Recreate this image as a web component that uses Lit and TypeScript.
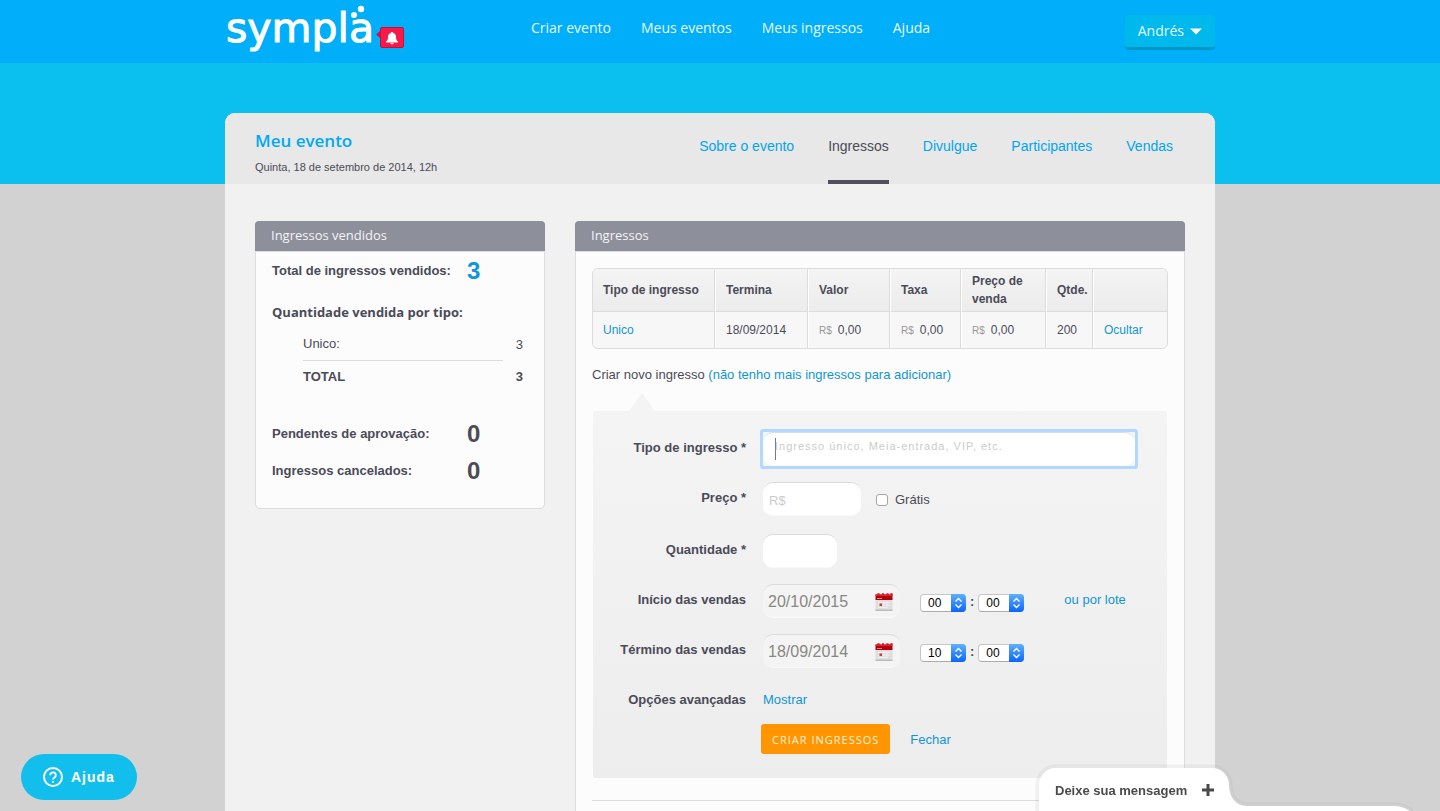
import { LitElement, html, css, svg } from "lit";
import { customElement, property } from "lit/decorators.js";
import { classMap } from "lit/directives/class-map.js";

const SANS = css`"Liberation Sans", Arial, Helvetica, sans-serif`;
const OPEN = css`"Open Sans", "Noto Sans", sans-serif`;

const base = css`
  *,
  *::before,
  *::after {
    box-sizing: border-box;
  }
  a {
    color: #1096d4;
    text-decoration: none;
  }
  h1,
  h2,
  h3,
  p {
    margin: 0;
  }
`;

@customElement("site-header")
export class SiteHeader extends LitElement {
  static styles = [
    base,
    css`
      :host {
        display: block;
        background: #00aef9;
        font-family: ${OPEN};
      }
      .inner {
        display: grid;
        grid-template-columns: 306px 1fr auto;
        align-items: start;
        max-width: 990px;
        height: 63px;
        margin: 0 auto;
      }
      .brand {
        display: flex;
      }
      .word {
        font: 400 41px "DejaVu Sans", sans-serif;
      }
      nav {
        display: flex;
        gap: 30px;
        padding-top: 18px;
        font-size: 14px;
        line-height: 20px;
      }
      nav a {
        color: #e6f7ff;
      }
      .user {
        display: flex;
        align-items: center;
        gap: 6px;
        height: 35px;
        margin-top: 15px;
        padding: 0 13px;
        border: 0;
        border-bottom: 3px solid #0097c6;
        border-radius: 4px;
        background: #00b9ec;
        color: #e6f7ff;
        font: 14px/20px ${OPEN};
      }
    `,
  ];

  render() {
    return html`
      <header class="inner">
        <a class="brand" href="#" aria-label="sympla">
          <svg width="182" height="60" viewBox="0 0 182 60">
            <text class="word" x="1" y="42" fill="#fff" stroke="#fff" stroke-width="1">sympla</text>
            <circle cx="129" cy="15" r="3" fill="#fff" />
            <circle cx="136" cy="9" r="3.200" fill="#fff" />
            <path d="M151 34.500l4-3.500v7z" fill="#d5123f" />
            <rect x="155.500" y="27.500" width="23" height="20" rx="1.500" fill="#f6194a" stroke="#c2123b" />
            <path
              d="M167 32c.8 0 1.200.5 1.200 1.100 1.900.6 2.800 2 2.800 3.900 0 2.600.6 3.600 2 4.600v.9h-12v-.9c1.400-1 2-2 2-4.600 0-1.900.9-3.300 2.800-3.900 0-.6.4-1.100 1.200-1.100zM165.500 43h3a1.500 1.200 0 0 1-3 0z"
              fill="#fff"
            />
          </svg>
        </a>
        <nav>
          <a href="#">Criar evento</a>
          <a href="#">Meus eventos</a>
          <a href="#">Meus ingressos</a>
          <a href="#">Ajuda</a>
        </nav>
        <button class="user" type="button">
          Andrés
          <svg width="12" height="7" viewBox="0 0 12 7"><path d="M0 .5h12l-6 6z" fill="#fff" /></svg>
        </button>
      </header>
    `;
  }
}

@customElement("event-heading")
export class EventHeading extends LitElement {
  static styles = [
    base,
    css`
      :host {
        display: flex;
        justify-content: space-between;
        height: 71px;
        padding: 0 42px 0 30px;
        border-radius: 10px 10px 0 0;
        background: #e8e8e8;
      }
      .title {
        padding-top: 16px;
      }
      h1 {
        color: #00aaf2;
        font: 600 17px/24px ${OPEN};
      }
      p {
        font-size: 11px;
        line-height: 28px;
      }
      .tabs {
        display: flex;
        gap: 34px;
        font-size: 14px;
        line-height: 67px;
      }
      .tab {
        color: #00a5ee;
      }
      .active {
        border-bottom: 4px solid #505060;
        color: #4b4b58;
      }
    `,
  ];

  private tabs = ["Sobre o evento", "Ingressos", "Divulgue", "Participantes", "Vendas"];

  render() {
    return html`
      <div class="title">
        <h1>Meu evento</h1>
        <p>Quinta, 18 de setembro de 2014, 12h</p>
      </div>
      <nav class="tabs">
        ${this.tabs.map(
          (t) => html`<a href="#" class=${classMap({ tab: true, active: t === "Ingressos" })}>${t}</a>`
        )}
      </nav>
    `;
  }
}

@customElement("content-panel")
export class ContentPanel extends LitElement {
  static styles = [
    base,
    css`
      :host {
        display: flex;
        flex-direction: column;
      }
      h2 {
        padding: 0 16px 2px;
        border-radius: 4px 4px 0 0;
        background: #8d8f9b;
        color: #f4f4f6;
        font: 400 13px/28px ${OPEN};
      }
      .body {
        flex: 1;
        padding: 0 16px;
        border: 1px solid #dcdcdc;
        border-radius: 0 0 5px 5px;
        background: #fcfcfc;
      }
      .flush {
        border-bottom: 0;
        border-radius: 0;
      }
    `,
  ];

  @property() heading = "";
  @property({ type: Boolean }) flush = false;

  render() {
    return html`<h2>${this.heading}</h2>
      <div class=${classMap({ body: true, flush: this.flush })}><slot></slot></div>`;
  }
}

@customElement("sales-summary")
export class SalesSummary extends LitElement {
  static styles = [
    base,
    css`
      :host {
        display: block;
        padding-bottom: 19px;
        font-size: 13px;
      }
      .stat {
        display: grid;
        grid-template-columns: 195px 1fr;
        font-weight: 700;
        line-height: 37px;
      }
      .figure {
        font-size: 24px;
      }
      .sold {
        color: #1096d4;
      }
      h3 {
        margin-top: 13px;
        font: 700 13px/20px ${OPEN};
      }
      table {
        margin: 5px 0 24px 31px;
        border-spacing: 0;
      }
      th,
      td {
        height: 30px;
        padding: 0;
      }
      th {
        width: 200px;
        font-weight: 400;
        text-align: left;
      }
      td {
        width: 20px;
        text-align: right;
      }
      .first th {
        height: 34px;
        border-bottom: 1px solid #dcdcdc;
      }
      .total th,
      .total td {
        font-weight: 700;
      }
    `,
  ];

  render() {
    return html`
      <div class="stat"><span>Total de ingressos vendidos:</span><span class="figure sold">3</span></div>
      <h3>Quantidade vendida por tipo:</h3>
      <table>
        <tr class="first">
          <th scope="row">Unico:</th>
          <td>3</td>
        </tr>
        <tr class="total">
          <th scope="row">TOTAL</th>
          <td>3</td>
        </tr>
      </table>
      <div class="stat"><span>Pendentes de aprovação:</span><span class="figure">0</span></div>
      <div class="stat"><span>Ingressos cancelados:</span><span class="figure">0</span></div>
    `;
  }
}

@customElement("ticket-table")
export class TicketTable extends LitElement {
  static styles = [
    base,
    css`
      :host {
        display: block;
        font-size: 12px;
        line-height: 18px;
      }
      table {
        width: 100%;
        overflow: hidden;
        border: 1px solid #dcdcdc;
        border-radius: 6px;
        border-spacing: 0;
        table-layout: fixed;
        background: #f7f7f7;
      }
      th,
      td {
        padding: 0 0 0 10px;
        border-right: 1px solid #dcdcdc;
        border-left: 1px solid #fff;
        text-align: left;
      }
      th {
        height: 43px;
        border-bottom: 1px solid #dcdcdc;
        background: linear-gradient(#f4f4f4, #ececec);
      }
      td {
        height: 36px;
      }
      th:first-child,
      td:first-child {
        border-left: 0;
      }
      th:last-child,
      td:last-child {
        border-right: 0;
      }
      .type {
        width: 122px;
      }
      .ends {
        width: 93px;
      }
      .value {
        width: 82px;
      }
      .fee {
        width: 71px;
      }
      .price {
        width: 85px;
      }
      .qty {
        width: 47px;
      }
      .currency {
        margin-right: 6px;
        color: #999;
        font-size: 10px;
      }
    `,
  ];

  private money = (v: string) => html`<span class="currency">R$</span>${v}`;

  render() {
    return html`
      <table>
        <thead>
          <tr>
            <th class="type">Tipo de ingresso</th>
            <th class="ends">Termina</th>
            <th class="value">Valor</th>
            <th class="fee">Taxa</th>
            <th class="price">Preço de<br />venda</th>
            <th class="qty">Qtde.</th>
            <th></th>
          </tr>
        </thead>
        <tbody>
          <tr>
            <td><a href="#">Unico</a></td>
            <td>18/09/2014</td>
            <td>${this.money("0,00")}</td>
            <td>${this.money("0,00")}</td>
            <td>${this.money("0,00")}</td>
            <td>200</td>
            <td><a href="#">Ocultar</a></td>
          </tr>
        </tbody>
      </table>
    `;
  }
}

const calendarIcon = svg`
  <rect x="0.500" y="7" width="17" height="11" fill="#dedede"/>
  <rect x="0.500" y="16.500" width="17" height="1.500" fill="#bcbcbc"/>
  <path d="M.5 7V1.500h2V.5h2v1h2.500V.5h2v1h2.500V.5h2v1h2V.5h2V7z" fill="#b5000c"/>
  <path d="M.5 1.500h2V.5h2v1h2.500V.5h2v1h2.500V.5h2v1h2V.5h2v2.500H.5z" fill="#d9222b"/>
  <path d="M2 5.500h5" stroke="#d98488"/>
  <path d="M3 9.500h12M3 12h12M3 14.500h9M9 8.500v7M12 8.500v7" stroke="#efefef"/>
  <rect x="4.500" y="10.500" width="2.500" height="2.500" fill="#c33c41"/>
`;

@customElement("ticket-form")
export class TicketForm extends LitElement {
  static styles = [
    base,
    css`
      :host {
        display: block;
        margin: 0 1px;
        font-size: 13px;
      }
      .pointer {
        display: block;
        margin-left: 36px;
      }
      form {
        padding: 21px 0 24px;
        border-radius: 3px;
        background: linear-gradient(#f4f4f4, #ededed);
      }
      .row {
        display: grid;
        grid-template-columns: 153px 1fr;
        column-gap: 17px;
        margin-bottom: 16px;
        line-height: 32px;
      }
      .price-row {
        margin-bottom: 18px;
      }
      .options-row {
        margin-bottom: 8px;
      }
      .name {
        font-weight: 700;
        text-align: right;
      }
      .fields {
        display: flex;
        align-items: flex-start;
        padding-right: 32px;
      }
      .text {
        height: 34px;
        padding: 0 6px;
        border: 0;
        border-top: 1px solid #dcdcdc;
        border-bottom: 1px solid #fafafa;
        border-radius: 10px;
        outline: 0;
        background: #fff;
        color: #888;
        font: 13px ${SANS};
      }
      .text::placeholder {
        color: #ccc;
        opacity: 1;
      }
      .focus {
        display: flex;
        flex: 1;
        border-radius: 1px;
        background: #f5f5f5;
        box-shadow: 0 0 0 3px #b2d8fd;
      }
      .wide {
        flex: 1;
        min-width: 0;
        padding: 0 12px 6px;
        /* insertion bar of the focused field */
        background: linear-gradient(#777, #777) no-repeat 12px 5px / 1px 22px #fff;
        font-size: 11px;
        letter-spacing: 1px;
      }
      .price {
        width: 98px;
        padding-top: 2px;
      }
      .amount {
        width: 74px;
      }
      .free {
        display: flex;
        align-items: center;
        gap: 7px;
        margin: 2px 0 0 15px;
      }
      .check {
        width: 12px;
        height: 12px;
        margin: 0;
        border: 1px solid #a5a5a5;
        border-radius: 3px;
        appearance: none;
        background: #fff;
      }
      .date {
        display: flex;
        align-items: center;
        width: 137px;
        height: 34px;
        padding: 2px 7px 0 0;
        border-top: 1px solid #dcdcdc;
        border-bottom: 1px solid #fafafa;
        border-radius: 10px;
        background: #f4f4f4;
      }
      .day {
        flex: 1;
        min-width: 0;
        padding: 0 0 0 5px;
        border: 0;
        background: none;
        color: #888880;
        font: 16px ${SANS};
      }
      .pick {
        display: flex;
        padding: 0;
        border: 0;
        background: none;
      }
      .time {
        display: flex;
        gap: 4px;
        margin: 10px 0 0 20px;
        font-weight: 700;
        line-height: 16px;
      }
      .select {
        display: grid;
        grid-template-columns: 30px 16px;
      }
      .select select {
        grid-area: 1 / 1 / 2 / 3;
        height: 18px;
        padding: 0 0 0 7px;
        border: 1px solid #c6c6c6;
        border-bottom-color: #aaa;
        border-radius: 4px;
        appearance: none;
        background: #fff;
        color: #000;
        font: 12px ${SANS};
      }
      .select svg {
        grid-area: 1 / 2;
        z-index: 1;
        pointer-events: none;
      }
      .batch {
        margin-left: 40px;
      }
      .actions {
        display: flex;
        align-items: center;
        gap: 20px;
        padding-left: 168px;
      }
      .submit {
        height: 30px;
        padding: 0 11px;
        border: 0;
        border-radius: 3px;
        background: #ff9500;
        color: #fff2de;
        font: 11px ${OPEN};
        letter-spacing: 1px;
        text-transform: uppercase;
      }
    `,
  ];

  private picker(label: string, value: string) {
    return html`
      <span class="select">
        <select aria-label=${label}>
          <option>${value}</option>
        </select>
        <svg width="16" height="18" viewBox="0 0 16 18">
          <defs>
            <linearGradient id="blue" x1="0" y1="0" x2="0" y2="1">
              <stop offset="0" stop-color="#5fb0fb" />
              <stop offset="1" stop-color="#0a66fb" />
            </linearGradient>
          </defs>
          <path d="M1 0h11a4 4 0 0 1 4 4v10a4 4 0 0 1-4 4H1z" fill="url(#blue)" />
          <path d="M5.500 7.500l3-3 3 3M5.500 10.500l3 3 3-3" fill="none" stroke="#fff" stroke-width="1.400" />
        </svg>
      </span>
    `;
  }

  private period(id: string, label: string, date: string, hour: string, minute: string, extra: unknown = "") {
    return html`
      <div class="row">
        <label class="name" for=${id}>${label}</label>
        <div class="fields">
          <span class="date">
            <input class="day" id=${id} type="text" .value=${date} />
            <button class="pick" type="button" aria-label="Calendário">
              <svg width="18" height="18" viewBox="0 0 18 18">${calendarIcon}</svg>
            </button>
          </span>
          <span class="time">${this.picker("Hora", hour)}<span>:</span>${this.picker("Minuto", minute)}</span>
          ${extra}
        </div>
      </div>
    `;
  }

  render() {
    return html`
      <svg class="pointer" width="26" height="18" viewBox="0 0 26 18">
        <path d="M13 0l13 18H0z" fill="#f4f4f4" />
      </svg>
      <form>
        <div class="row">
          <label class="name" for="type">Tipo de ingresso *</label>
          <div class="fields">
            <span class="focus">
              <input
                class="text wide"
                id="type"
                type="text"
                placeholder="Ingresso único, Meia-entrada, VIP, etc."
              />
            </span>
          </div>
        </div>
        <div class="row price-row">
          <label class="name" for="price">Preço *</label>
          <div class="fields">
            <input class="text price" id="price" type="text" placeholder="R$" />
            <label class="free"><input class="check" type="checkbox" />Grátis</label>
          </div>
        </div>
        <div class="row">
          <label class="name" for="amount">Quantidade *</label>
          <div class="fields"><input class="text amount" id="amount" type="text" /></div>
        </div>
        ${this.period(
          "start",
          "Início das vendas",
          "20/10/2015",
          "00",
          "00",
          html`<a class="batch" href="#">ou por lote</a>`
        )}
        ${this.period("end", "Término das vendas", "18/09/2014", "10", "00")}
        <div class="row options-row">
          <span class="name">Opções avançadas</span>
          <a href="#">Mostrar</a>
        </div>
        <div class="actions">
          <button class="submit" type="button">Criar ingressos</button>
          <a href="#">Fechar</a>
        </div>
      </form>
    `;
  }
}

@customElement("app-root")
export class AppRoot extends LitElement {
  static styles = [
    base,
    css`
      :host {
        display: flex;
        flex-direction: column;
        min-height: 100vh;
        background: #d2d2d2;
        color: #4b4b58;
        font-family: ${SANS};
      }
      .stage {
        display: flex;
        flex: 1;
        flex-direction: column;
        padding-top: 50px;
        background: linear-gradient(#0bbfee, #0bbfee) no-repeat 0 0 / 100% 121px;
      }
      .card {
        display: flex;
        flex: 1;
        flex-direction: column;
        width: 100%;
        max-width: 990px;
        margin: 0 auto;
        border-radius: 10px 10px 0 0;
        background: #f1f1f1;
      }
      .columns {
        display: grid;
        flex: 1;
        grid-template-columns: 290px 1fr;
        gap: 30px;
        padding: 37px 30px 0;
      }
      .summary {
        align-self: start;
      }
      .tickets {
        display: block;
        margin-top: 16px;
      }
      .create {
        margin: 16px 0 8px;
        font-size: 13px;
        line-height: 20px;
      }
      .rule {
        height: 1px;
        margin: 22px 0 10px;
        border: 0;
        background: #dcdcdc;
      }
      .help {
        position: fixed;
        bottom: 11px;
        left: 21px;
        display: flex;
        align-items: center;
        gap: 8px;
        height: 46px;
        padding: 0 22px;
        border: 0;
        border-radius: 23px;
        background: #12bfec;
        color: #fff;
        font: 700 14px ${SANS};
        letter-spacing: 1px;
      }
      .chat {
        position: fixed;
        right: 0;
        bottom: 0;
        display: grid;
        padding: 0;
        border: 0;
        background: none;
        color: #4a4a4a;
        font: 700 13px ${SANS};
      }
      .shape,
      .chat-label {
        grid-area: 1 / 1;
      }
      .chat-label {
        display: flex;
        align-items: center;
        gap: 15px;
        padding: 9px 0 0 25px;
      }
    `,
  ];

  render() {
    const outline = "M9 52V25A17 17 0 0 1 26 8H182A17 17 0 0 1 199 25C199 37 206 46 217 46H363Q374 46 381 52";
    return html`
      <site-header></site-header>
      <div class="stage">
        <main class="card">
          <event-heading></event-heading>
          <div class="columns">
            <content-panel class="summary" heading="Ingressos vendidos">
              <sales-summary></sales-summary>
            </content-panel>
            <content-panel heading="Ingressos" flush>
              <ticket-table class="tickets"></ticket-table>
              <p class="create">Criar novo ingresso <a href="#">(não tenho mais ingressos para adicionar)</a></p>
              <ticket-form></ticket-form>
              <hr class="rule" />
            </content-panel>
          </div>
        </main>
      </div>
      <button class="help" type="button">
        <svg width="20" height="20" viewBox="0 0 20 20" fill="none" stroke="#fff">
          <circle cx="10" cy="10" r="9" stroke-width="2" />
          <path d="M7.200 8.200a2.800 2.800 0 1 1 4.300 2.300c-1 .6-1.500 1-1.500 2" stroke-width="1.800" />
          <circle cx="10" cy="14.800" r="1.100" fill="#fff" stroke="none" />
        </svg>
        Ajuda
      </button>
      <button class="chat" type="button">
        <svg class="shape" width="410" height="51" viewBox="0 0 410 51">
          <path d=${outline} fill="none" stroke="#000" stroke-opacity=".05" stroke-width="7" />
          <path d=${outline} fill="none" stroke="#fff" stroke-opacity=".15" stroke-width="5" />
          <path d=${outline} fill="#fff" />
        </svg>
        <span class="chat-label">
          Deixe sua mensagem
          <svg width="12" height="12" viewBox="0 0 12 12"><path d="M4.500 0h3v4.500H12v3H7.500V12h-3V7.500H0v-3h4.500z" fill="#4a4a4a" /></svg>
        </span>
      </button>
    `;
  }
}
